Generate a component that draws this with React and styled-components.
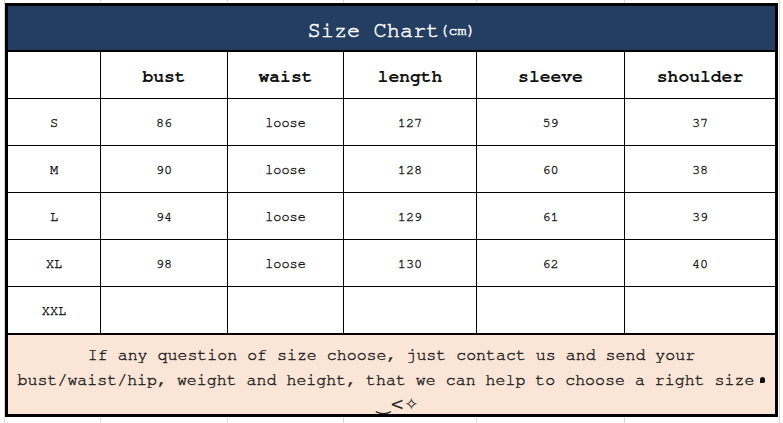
import React from "react";
import styled, { createGlobalStyle } from "styled-components";

const GlobalStyle = createGlobalStyle`
    html, body {
        margin: 0;
        padding: 0;
        background: #ffffff;
    }
    body {
        font-family: "FreeMono", "Nimbus Mono PS", "Courier", "Liberation Mono", monospace;
        color: #111;
    }
`;

// faint spreadsheet gridlines showing around the table
const Page = styled.div`
    width: 783px;
    height: 423px;
    box-sizing: border-box;
    padding: 3px 5px 0 5px;
    background-color: #fff;
    background-image:
        linear-gradient(#d9d9d9, #d9d9d9),
        linear-gradient(#d9d9d9, #d9d9d9),
        linear-gradient(#d9d9d9, #d9d9d9),
        linear-gradient(#d9d9d9, #d9d9d9),
        linear-gradient(#d9d9d9, #d9d9d9),
        linear-gradient(#d9d9d9, #d9d9d9),
        linear-gradient(#d9d9d9, #d9d9d9);
    background-size: 1px 100%, 1px 100%, 1px 100%, 1px 100%, 1px 100%, 1px 100%, 1px 100%;
    background-position: 4px 0, 100px 0, 227px 0, 343px 0, 476px 0, 624px 0, 779px 0;
    background-repeat: no-repeat;
`;

const Sheet = styled.div`
    width: 773px;
    box-sizing: border-box;
    border: 3px solid #000;
    background: #fff;
    display: flex;
    flex-direction: column;
`;

const Title = styled.div`
    height: 46px;
    box-sizing: border-box;
    padding-top: 4px;
    background: #243e62;
    border-bottom: 2px solid #000;
    color: #fff;
    display: flex;
    align-items: center;
    justify-content: center;
    font-size: 22px;
    -webkit-text-stroke: 0.5px #fff;
`;

const Unit = styled.span`
    font-size: 15px;
`;

const Grid = styled.div`
    display: grid;
    grid-template-columns: 92px 126px 115px 132px 147px 1fr;
    grid-auto-rows: 46px;
    gap: 1px;
    background: #000;
`;

const Cell = styled.div`
    background: #fff;
    display: flex;
    align-items: center;
    justify-content: center;
    font-size: ${(p) => (p.head ? "18px" : "13.5px")};
    font-weight: ${(p) => (p.head ? "bold" : "normal")};
    -webkit-text-stroke: ${(p) => (p.head ? "0" : "0.35px #111")};
    color: #111;
    padding-top: ${(p) => (p.head ? "3px" : "1px")};
`;

const Footer = styled.div`
    border-top: 2px solid #000;
    background: #fbe5d6;
    height: 81px;
    box-sizing: border-box;
    padding-top: 8px;
    display: flex;
    flex-direction: column;
    align-items: center;
    font-size: 16.6px;
    line-height: 24.5px;
    color: #222;
    -webkit-text-stroke: 0.4px #222;
`;

const Line = styled.div`
    white-space: nowrap;
`;

// small filled drop after "size"
const Mark = styled.span`
    display: inline-block;
    width: 5px;
    height: 6px;
    margin-left: 6px;
    background: #111;
    border-radius: 3px 3px 2px 0;
    vertical-align: 2px;
`;

const Smile = styled.span`
    font-family: "DejaVu Sans", sans-serif;
    font-size: 17px;
    margin-left: 12px;
    -webkit-text-stroke: 0;
`;

const headers = ["", "bust", "waist", "length", "sleeve", "shoulder"];
const rows = [
    ["S", "86", "loose", "127", "59", "37"],
    ["M", "90", "loose", "128", "60", "38"],
    ["L", "94", "loose", "129", "61", "39"],
    ["XL", "98", "loose", "130", "62", "40"],
    ["XXL", "", "", "", "", ""],
];

const App = () => {
    return (
        <Page>
            <GlobalStyle />
            <Sheet>
                <Title>
                    Size Chart<Unit>(cm)</Unit>
                </Title>
                <Grid>
                    {headers.map((h, i) => (
                        <Cell head key={"h" + i}>
                            {h}
                        </Cell>
                    ))}
                    {rows.map((row, r) =>
                        row.map((v, c) => <Cell key={r + "-" + c}>{v}</Cell>)
                    )}
                </Grid>
                <Footer>
                    <Line>If any question of size choose, just contact us and send your</Line>
                    <Line>
                        bust/waist/hip, weight and height, that we can help to choose a right size
                        <Mark />
                    </Line>
                    <Line>
                        <Smile>‿&lt;✧</Smile>
                    </Line>
                </Footer>
            </Sheet>
        </Page>
    );
};

export default App;
